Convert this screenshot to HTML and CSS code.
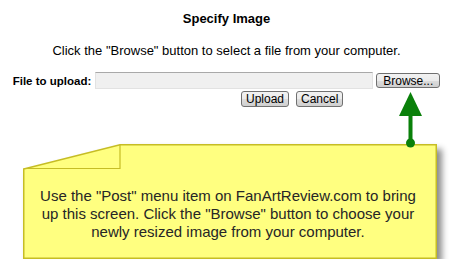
FILE: index.html
```html
<!DOCTYPE html>
<html lang="en">
  <head>
    <meta charset="UTF-8" />
    <title>Specify Image</title>
    <link rel="stylesheet" href="styles.css">
  </head>
  <body>
    <div class="page">
      <h1 class="title">Specify Image</h1>
      <p class="intro">Click the "Browse" button to select a file from your computer.</p>

      <div class="upload-row">
        <label for="filePath" class="upload-label">File to upload:</label>
        <input type="text" id="filePath" class="file-path" />
        <button class="btn btn-browse">Browse...</button>
      </div>

      <div class="actions">
        <button class="btn">Upload</button>
        <button class="btn">Cancel</button>
      </div>
    </div>

    <!-- Callout note -->
    <div class="note">
      <svg class="note-shape" width="414" height="115" viewBox="0 0 414 115">
        <polygon points="0.75,25 97,0.75 413.25,0.75 413.25,114.25 0.75,114.25" fill="#ffff80" stroke="#c6bd25" stroke-width="1.5" />
        <polyline points="97,0.75 97,24.5 0.75,24.5" fill="none" stroke="#c6bd25" stroke-width="1.2" />
      </svg>
      <svg class="note-arrow" width="26" height="60" viewBox="0 0 26 60">
        <polygon points="12.5,2 1,26 24,26" fill="#0a800a" />
        <rect x="10.5" y="25" width="4" height="28" fill="#0a800a" />
        <circle cx="12.5" cy="53" r="4.5" fill="#0a800a" />
      </svg>
      <p class="note-text">
        Use the "Post" menu item on FanArtReview.com to bring<br />
        up this screen. Click the "Browse" button to choose your<br />
        newly resized image from your computer.
      </p>
    </div>
  </body>
</html>
```

FILE: styles.css
```css
body {
  margin: 0;
  background: #fff;
  font-family: "Liberation Sans", Arial, sans-serif;
  color: #000;
}

.page {
  width: 453px;
  text-align: center;
}

.title {
  margin: 0;
  padding-top: 11px;
  font-size: 13px;
  line-height: 15px;
  font-weight: bold;
}

.intro {
  margin: 17px 0 0;
  font-size: 13px;
  line-height: 15px;
}

.upload-row {
  display: flex;
  align-items: center;
  justify-content: center;
  margin-top: 14px;
  height: 17px;
}

.upload-label {
  font-size: 11.5px;
  font-weight: bold;
  margin-right: 4px;
}

.file-path {
  box-sizing: border-box;
  width: 278px;
  height: 17px;
  margin: 0 3px 0 0;
  padding: 0;
  background: #f0f0f0;
  border: 1px solid #e2e2e2;
  border-top-color: #a9a9a9;
}

.btn {
  box-sizing: border-box;
  height: 16px;
  margin: 0;
  padding: 0 4px;
  font-family: "Liberation Sans", Arial, sans-serif;
  font-size: 12px;
  line-height: 14px;
  color: #000;
  border: 1px solid #707070;
  border-radius: 3px;
  background: linear-gradient(#f2f2f2, #ebebeb 50%, #dddddd 51%, #cfcfcf);
}

.btn-browse {
  width: 64px;
  height: 15px;
}

.actions {
  display: flex;
  gap: 7px;
  margin: 2px 0 0 241px;
}

.actions .btn {
  min-width: 47px;
}

.note {
  position: relative;
  width: 414px;
  height: 115px;
  margin: 37px 0 0 23px;
}

.note-shape {
  position: absolute;
  left: 0;
  top: 0;
  filter: drop-shadow(5px 5px 3px rgba(0, 0, 0, 0.45));
}

.note-arrow {
  position: absolute;
  left: 375px;
  top: -54px;
}

.note-text {
  position: relative;
  margin: 0;
  padding: 43px 10px 0 6px;
  text-align: center;
  white-space: nowrap;
  font-size: 15px;
  line-height: 18px;
  color: #262626;
}
```
